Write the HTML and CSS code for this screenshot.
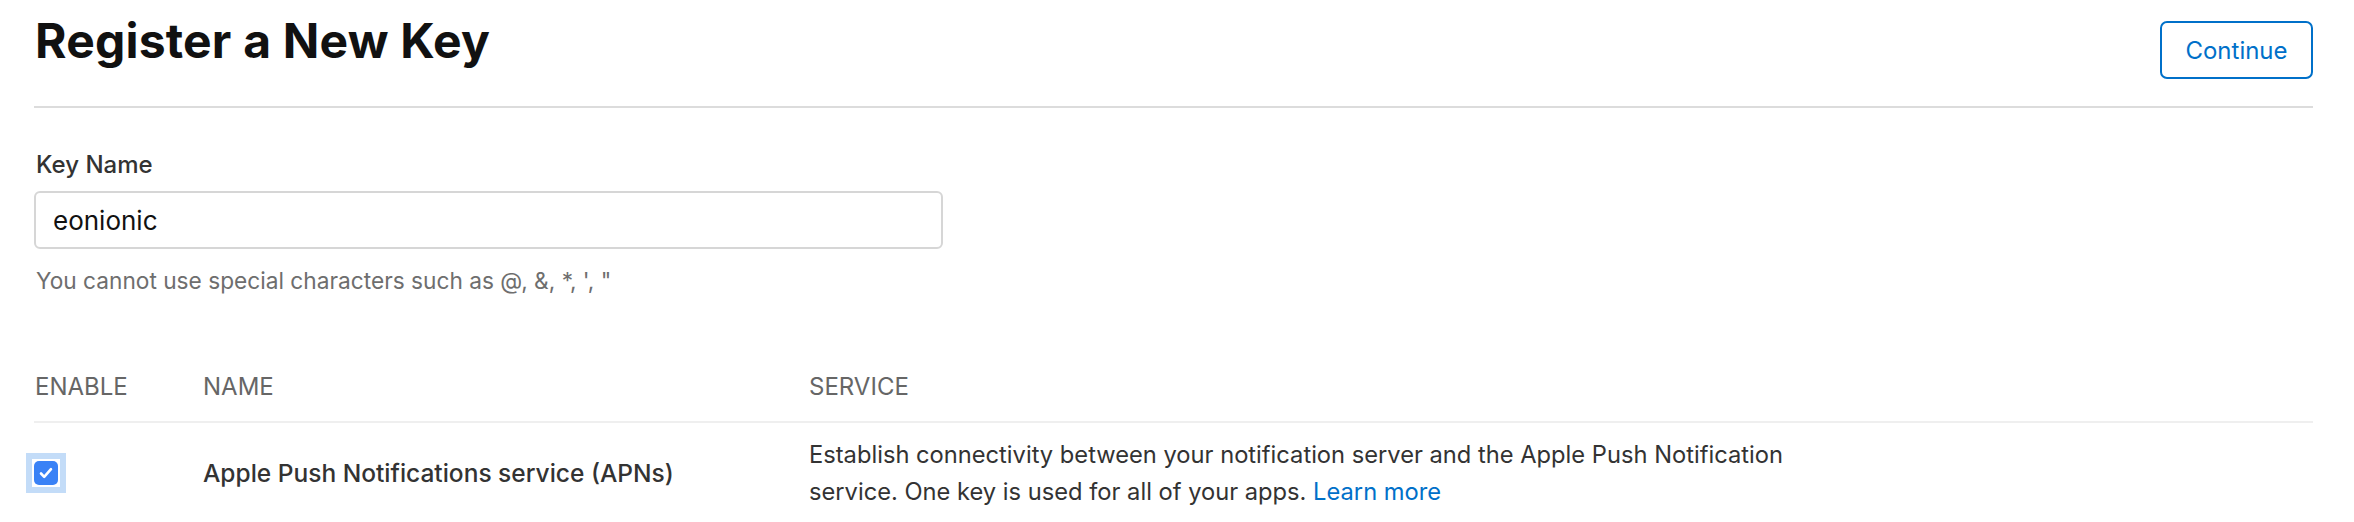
FILE: index.html
```html
<!DOCTYPE html>
<html lang="en">
<head>
<meta charset="utf-8">
<title>Register a New Key</title>
<link rel="stylesheet" href="styles.css">
</head>
<body>
<main class="page">
  <header class="header">
    <h1 class="title">Register a New Key</h1>
    <button class="btn" type="button">Continue</button>
  </header>

  <section class="field">
    <label class="label" for="keyname">Key Name</label>
    <input class="input" id="keyname" type="text" value="eonionic">
    <p class="help">You cannot use special characters such as @, &amp;, *, ', "</p>
  </section>

  <section class="table">
    <div class="thead">
      <div class="th">ENABLE</div>
      <div class="th">NAME</div>
      <div class="th">SERVICE</div>
    </div>
    <div class="trow">
      <div class="td">
        <span class="check-focus"><span class="check-ring"><span class="check-box">
          <svg viewBox="0 0 24 24" width="24" height="24"><path d="M7 12.5l3.2 3.3L17 8.2" fill="none" stroke="#fff" stroke-width="2.6" stroke-linecap="round" stroke-linejoin="round"/></svg>
        </span></span></span>
      </div>
      <div class="td name">Apple Push Notifications service (APNs)</div>
      <div class="td desc">Establish connectivity between your notification server and the Apple Push Notification service. One key is used for all of your apps. <a class="link" href="#">Learn more</a></div>
    </div>
  </section>
</main>
</body>
</html>
```

FILE: styles.css
```css
html, body {
  margin: 0;
  padding: 0;
  background: #fff;
}
body {
  font-family: Inter, "Noto Sans", "Liberation Sans", sans-serif;
  color: #333;
}
.page {
  padding: 0 41px 0 34px;
}
.header {
  display: flex;
  justify-content: space-between;
  align-items: flex-start;
  padding-bottom: 27px;
  border-bottom: 2px solid #dcdcdc;
}
.title {
  margin: 12px 0 0 1px;
  font-size: 48px;
  line-height: 58px;
  font-weight: 700;
  color: #111;
  letter-spacing: 0.2px;
}
.btn {
  margin-top: 21px;
  height: 58px;
  width: 153px;
  box-sizing: border-box;
  border: 2px solid #0070c9;
  border-radius: 7px;
  background: #fff;
  color: #0070c9;
  font-family: inherit;
  font-size: 24px;
  padding: 0;
}
.field {
  padding-top: 42px;
}
.label {
  display: block;
  font-size: 24px;
  line-height: 30px;
  font-weight: 500;
  color: #333;
  margin-left: 2px;
}
.input {
  display: block;
  margin-top: 11px;
  width: 909px;
  height: 58px;
  box-sizing: border-box;
  border: 2px solid #d6d6d6;
  border-radius: 6px;
  padding: 0 17px;
  font-family: inherit;
  font-size: 26px;
  color: #111;
  outline: none;
}
.help {
  margin: 18px 0 0 2px;
  font-size: 22.7px;
  line-height: 28px;
  color: #6e6e6e;
}
.table {
  margin-top: 77px;
}
.thead, .trow {
  display: grid;
  grid-template-columns: 168px 606px 1fr;
}
.thead {
  padding-bottom: 19px;
  border-bottom: 2px solid #efefef;
}
.th {
  font-size: 24px;
  line-height: 30px;
  color: #666;
  padding-left: 1px;
}
.trow {
  align-items: center;
  padding-top: 13px;
}
.td {
  padding-left: 1px;
}
.name {
  font-size: 24.5px;
  font-weight: 500;
  color: #333;
}
.desc {
  max-width: 1040px;
  font-size: 23.7px;
  line-height: 37px;
  color: #333;
}
.link {
  color: #0070c9;
  text-decoration: none;
}
.check-focus {
  display: flex;
  align-items: center;
  justify-content: center;
  width: 40px;
  height: 40px;
  margin-left: -9px;
  background: #c3dcf8;
}
.check-ring {
  display: flex;
  align-items: center;
  justify-content: center;
  width: 28px;
  height: 28px;
  background: #fff;
}
.check-box {
  display: flex;
  width: 24px;
  height: 24px;
  border-radius: 5px;
  background: #3a82f6;
}
```
